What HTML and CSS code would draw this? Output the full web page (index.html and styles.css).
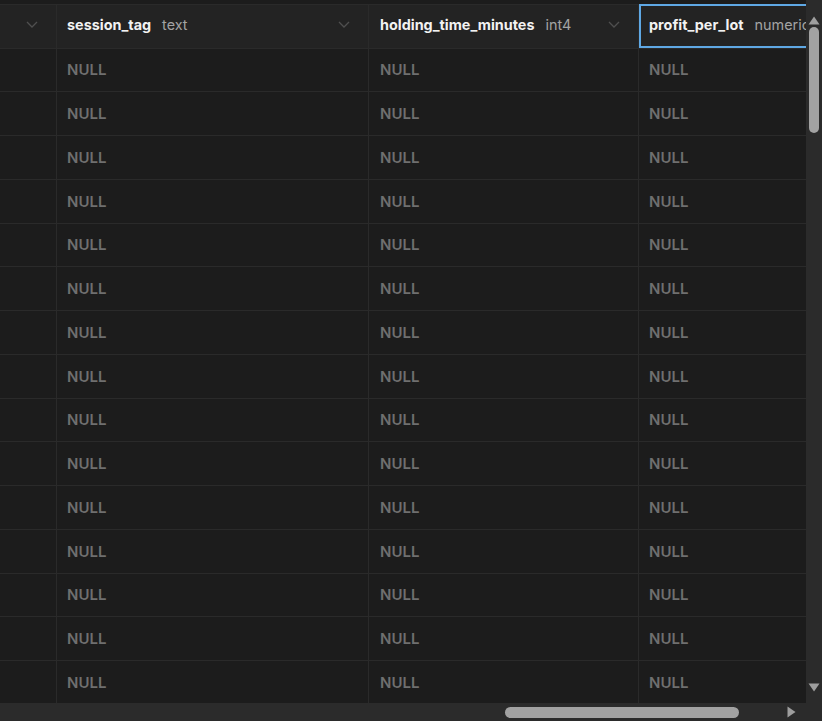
FILE: index.html
```html
<!DOCTYPE html>
<html>
<head>
<meta charset="utf-8">
<link rel="stylesheet" href="styles.css">
</head>
<body>
<div class="frame">
  <div class="grid">
    <div class="topstrip"></div>
    <div class="row head">
      <div class="cell c0"><svg class="chev" viewBox="0 0 12 7" width="12" height="7"><path d="M1 1l5 5 5-5" fill="none" stroke="#4f4f4f" stroke-width="1.3"/></svg></div>
      <div class="cell c1"><span class="name">session_tag</span><span class="type">text</span><svg class="chev" viewBox="0 0 12 7" width="12" height="7"><path d="M1 1l5 5 5-5" fill="none" stroke="#4f4f4f" stroke-width="1.3"/></svg></div>
      <div class="cell c2"><span class="name">holding_time_minutes</span><span class="type">int4</span><svg class="chev" viewBox="0 0 12 7" width="12" height="7"><path d="M1 1l5 5 5-5" fill="none" stroke="#4f4f4f" stroke-width="1.3"/></svg></div>
      <div class="cell c3 selected"><span class="name">profit_per_lot</span><span class="type">numeric</span></div>
    </div>
    <div class="row"><div class="cell c0"></div><div class="cell c1">NULL</div><div class="cell c2">NULL</div><div class="cell c3">NULL</div></div>
    <div class="row"><div class="cell c0"></div><div class="cell c1">NULL</div><div class="cell c2">NULL</div><div class="cell c3">NULL</div></div>
    <div class="row"><div class="cell c0"></div><div class="cell c1">NULL</div><div class="cell c2">NULL</div><div class="cell c3">NULL</div></div>
    <div class="row"><div class="cell c0"></div><div class="cell c1">NULL</div><div class="cell c2">NULL</div><div class="cell c3">NULL</div></div>
    <div class="row"><div class="cell c0"></div><div class="cell c1">NULL</div><div class="cell c2">NULL</div><div class="cell c3">NULL</div></div>
    <div class="row"><div class="cell c0"></div><div class="cell c1">NULL</div><div class="cell c2">NULL</div><div class="cell c3">NULL</div></div>
    <div class="row"><div class="cell c0"></div><div class="cell c1">NULL</div><div class="cell c2">NULL</div><div class="cell c3">NULL</div></div>
    <div class="row"><div class="cell c0"></div><div class="cell c1">NULL</div><div class="cell c2">NULL</div><div class="cell c3">NULL</div></div>
    <div class="row"><div class="cell c0"></div><div class="cell c1">NULL</div><div class="cell c2">NULL</div><div class="cell c3">NULL</div></div>
    <div class="row"><div class="cell c0"></div><div class="cell c1">NULL</div><div class="cell c2">NULL</div><div class="cell c3">NULL</div></div>
    <div class="row"><div class="cell c0"></div><div class="cell c1">NULL</div><div class="cell c2">NULL</div><div class="cell c3">NULL</div></div>
    <div class="row"><div class="cell c0"></div><div class="cell c1">NULL</div><div class="cell c2">NULL</div><div class="cell c3">NULL</div></div>
    <div class="row"><div class="cell c0"></div><div class="cell c1">NULL</div><div class="cell c2">NULL</div><div class="cell c3">NULL</div></div>
    <div class="row"><div class="cell c0"></div><div class="cell c1">NULL</div><div class="cell c2">NULL</div><div class="cell c3">NULL</div></div>
    <div class="row"><div class="cell c0"></div><div class="cell c1">NULL</div><div class="cell c2">NULL</div><div class="cell c3">NULL</div></div>
  </div>
  <div class="vbar">
    <svg class="arrow-up" viewBox="0 0 12 9" width="12" height="9"><path d="M6 0.5L11.5 8.5H0.5Z" fill="#9e9e9e"/></svg>
    <div class="vthumb"></div>
    <svg class="arrow-down" viewBox="0 0 12 9" width="12" height="9"><path d="M0.5 0.5H11.5L6 8.5Z" fill="#9e9e9e"/></svg>
  </div>
  <div class="hbar">
    <div class="hthumb"></div>
    <svg class="arrow-right" viewBox="0 0 9 12" width="9" height="12"><path d="M0.5 0.5L8.5 6L0.5 11.5Z" fill="#9e9e9e"/></svg>
  </div>
  <div class="corner"></div>
</div>
</body>
</html>
```
FILE: styles.css
```css
html, body {
  margin: 0;
  padding: 0;
  background: #1c1c1c;
  overflow: hidden;
}
.frame {
  width: 822px;
  height: 721px;
  display: grid;
  grid-template-columns: 806px 16px;
  grid-template-rows: 703px 18px;
  font-family: Inter, "Noto Sans", sans-serif;
}
.grid {
  overflow: hidden;
  background: #1c1c1c;
}
.topstrip {
  height: 4px;
  background: #1c1c1c;
  border-bottom: 1px solid #2a2a2a;
}
.row {
  display: flex;
  height: 43.75px;
  box-sizing: border-box;
  border-bottom: 1px solid #2a2a2a;
  white-space: nowrap;
}
.row.head {
  height: 43.5px;
  background: #232323;
}
.cell {
  box-sizing: border-box;
  flex: none;
  display: flex;
  align-items: center;
  border-right: 1px solid #2a2a2a;
  padding-left: 10px;
  font-size: 15px;
  font-weight: 600;
  color: #6f6f6f;
  overflow: hidden;
}
.c0 { width: 57px; }
.c1 { width: 312px; }
.c2 { width: 270px; padding-left: 11px; }
.c3 { width: 300px; border-right: none; }
.head .cell {
  padding-right: 18px;
  padding-bottom: 3px;
}
.head .c0 { padding-left: 0; }
.head .c3.selected {
  border: 2px solid #5fa8e4;
  padding-left: 8px;
  margin-top: -1px;
  height: calc(100% + 1px);
}
.name {
  font-size: 14.4px;
  font-weight: 700;
  color: #f2f2f2;
}
.type {
  font-size: 14.4px;
  font-weight: 400;
  color: #a3a3a3;
  margin-left: 11px;
}
.chev {
  margin-left: auto;
  flex: none;
}
.vbar {
  background: #2b2b2b;
  display: flex;
  flex-direction: column;
  align-items: center;
}
.arrow-up {
  margin-top: 16px;
}
.vthumb {
  width: 10px;
  height: 106px;
  margin-top: 2px;
  border-radius: 5px;
  background: #a2a2a2;
}
.arrow-down {
  margin-top: auto;
  margin-bottom: 11px;
}
.hbar {
  background: #2b2b2b;
  display: flex;
  align-items: center;
}
.hthumb {
  margin-left: 505px;
  width: 234px;
  height: 11px;
  border-radius: 6px;
  background: #a2a2a2;
}
.arrow-right {
  margin-left: 48px;
}
.corner {
  background: #2b2b2b;
}
```
